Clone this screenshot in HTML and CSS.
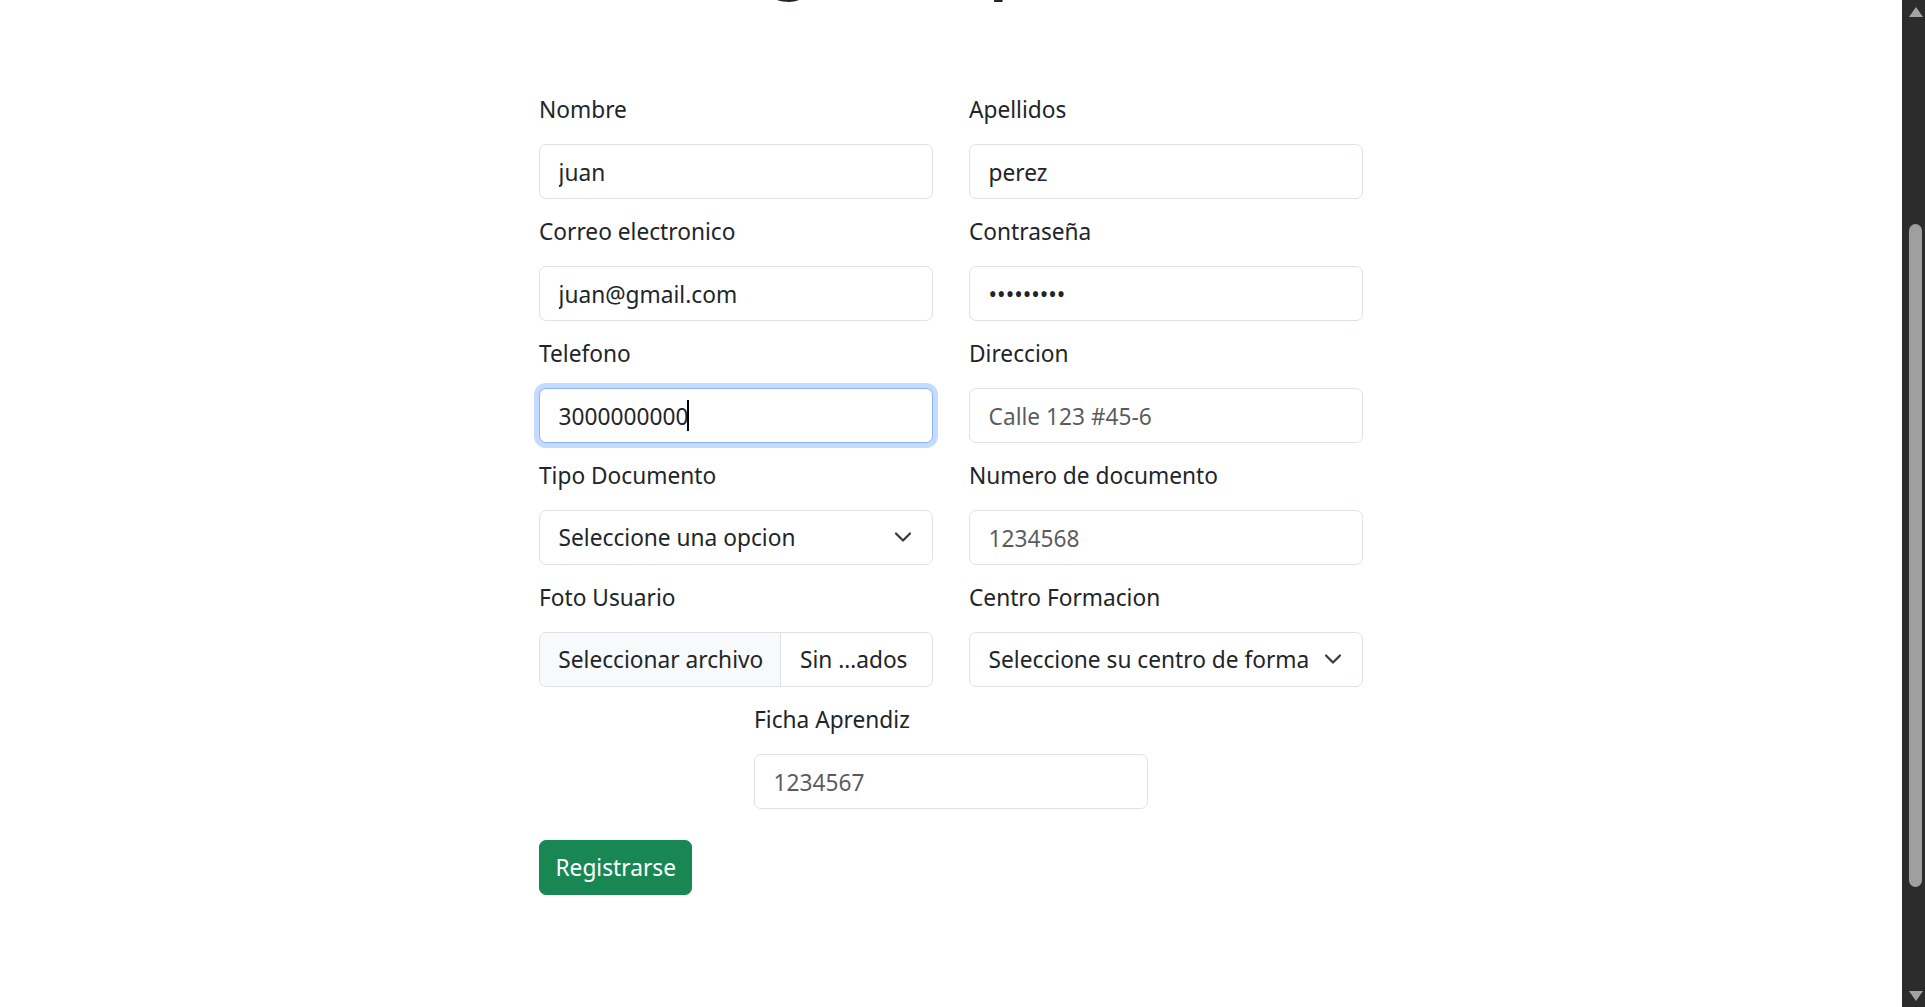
FILE: index.html
```html
<!DOCTYPE html>
<html lang="es">
<head>
<meta charset="utf-8">
<title>Registro Aprendiz</title>
<link rel="stylesheet" href="styles.css">
</head>
<body>
<div class="page">
  <main class="main">
    <h1 class="title">Registro Aprendiz</h1>
    <form class="form">
      <div class="grid">
        <div class="field">
          <label class="label">Nombre</label>
          <input class="control" type="text" value="juan">
        </div>
        <div class="field">
          <label class="label">Apellidos</label>
          <input class="control" type="text" value="perez">
        </div>
        <div class="field">
          <label class="label">Correo electronico</label>
          <input class="control" type="email" value="juan@gmail.com">
        </div>
        <div class="field">
          <label class="label">Contraseña</label>
          <input class="control" type="password" value="123456789">
        </div>
        <div class="field">
          <label class="label">Telefono</label>
          <div class="control-wrap">
            <input class="control control-focus" type="text" value="3000000000">
            <span class="caret"></span>
          </div>
        </div>
        <div class="field">
          <label class="label">Direccion</label>
          <input class="control" type="text" placeholder="Calle 123 #45-6">
        </div>
        <div class="field">
          <label class="label">Tipo Documento</label>
          <div class="control-wrap">
            <select class="control select">
              <option>Seleccione una opcion</option>
            </select>
            <svg class="chevron" width="20" height="12" viewBox="0 0 20 12"><path d="M3 2.5 10 9.5 17 2.5" fill="none" stroke="#343a40" stroke-width="2.2" stroke-linecap="round" stroke-linejoin="round"/></svg>
          </div>
        </div>
        <div class="field">
          <label class="label">Numero de documento</label>
          <input class="control" type="text" placeholder="1234568">
        </div>
        <div class="field">
          <label class="label">Foto Usuario</label>
          <div class="control file">
            <span class="file-btn">Seleccionar archivo</span>
            <span class="file-name">Sin …ados</span>
          </div>
        </div>
        <div class="field">
          <label class="label">Centro Formacion</label>
          <div class="control-wrap">
            <select class="control select">
              <option>Seleccione su centro de formacion</option>
            </select>
            <svg class="chevron" width="20" height="12" viewBox="0 0 20 12"><path d="M3 2.5 10 9.5 17 2.5" fill="none" stroke="#343a40" stroke-width="2.2" stroke-linecap="round" stroke-linejoin="round"/></svg>
          </div>
        </div>
        <div class="field field-center">
          <label class="label">Ficha Aprendiz</label>
          <input class="control" type="text" placeholder="1234567">
        </div>
      </div>
      <button class="btn" type="button">Registrarse</button>
    </form>
  </main>
  <div class="scrollbar">
    <span class="arrow arrow-up"></span>
    <span class="thumb"></span>
    <span class="arrow arrow-down"></span>
  </div>
</div>
</body>
</html>
```

FILE: styles.css
```css
html, body {
  margin: 0;
  padding: 0;
  background: #ffffff;
}

body {
  font-family: "Noto Sans", "Open Sans", sans-serif;
  font-size: 22.7px;
  line-height: 33.6px;
  color: #212529;
}

.page {
  display: flex;
  height: 1007px;
  overflow: hidden;
}

.main {
  flex: 1;
  min-width: 0;
  overflow: hidden;
}

.title {
  margin: -66px 0 0;
  font-size: 56px;
  line-height: 67.2px;
  font-weight: 700;
  text-align: center;
  color: #212529;
}

.form {
  width: 824px;
  margin: 90.8px auto 0;
}

.grid {
  display: grid;
  grid-template-columns: 394px 394px;
  column-gap: 36px;
  row-gap: 15px;
}

.field {
  display: flex;
  flex-direction: column;
}

.field-center {
  grid-column: 1 / -1;
  justify-self: center;
  width: 394px;
}

.label {
  display: block;
  height: 33.6px;
  padding-top: 1px;
  margin-bottom: 17.4px;
}

.control {
  box-sizing: border-box;
  width: 100%;
  height: 55px;
  margin: 0;
  padding: 11px 16.8px 8.4px 18.6px;
  font: inherit;
  font-size: 22.7px;
  line-height: 33.6px;
  color: #212529;
  background: #ffffff;
  border: 1px solid #dee2e6;
  border-radius: 7px;
  outline: none;
}

.control::placeholder {
  color: rgba(33, 37, 41, 0.75);
  opacity: 1;
}

.control-focus {
  border-color: #86b7fe;
  box-shadow: 0 0 0 5px rgba(13, 110, 253, 0.25);
}

.control-wrap {
  position: relative;
}

.caret {
  position: absolute;
  left: 148px;
  top: 12px;
  width: 1.6px;
  height: 31px;
  background: #000000;
}

.select {
  appearance: none;
  -webkit-appearance: none;
  padding-right: 54px;
  padding-top: 1.5px;
  padding-bottom: 0;
  cursor: default;
}

.chevron {
  position: absolute;
  right: 20px;
  top: 21px;
  pointer-events: none;
}

.file {
  display: flex;
  align-items: stretch;
  padding: 1.5px 0 0;
  overflow: hidden;
}

.file-btn {
  display: flex;
  align-items: center;
  padding: 1.5px 17px 0 18.3px;
  margin-top: -1.5px;
  background: #f8f9fa;
  border-right: 1px solid #dee2e6;
  white-space: nowrap;
}

.file-name {
  display: flex;
  align-items: center;
  padding-left: 18.8px;
  white-space: nowrap;
}

.btn {
  display: block;
  box-sizing: border-box;
  height: 55px;
  margin: 31px 0 0;
  padding: 1.5px 15.5px 0;
  font: inherit;
  font-size: 22.7px;
  line-height: 33.6px;
  color: #ffffff;
  background: #198754;
  border: 1px solid #198754;
  border-radius: 7px;
  cursor: pointer;
}

.scrollbar {
  flex: 0 0 23px;
  width: 23px;
  background: #2c2c2c;
  display: flex;
  flex-direction: column;
  align-items: center;
  padding-top: 7px;
  box-sizing: border-box;
}

.arrow {
  width: 0;
  height: 0;
  border-left: 7px solid transparent;
  border-right: 7px solid transparent;
  margin-left: 4px;
}

.arrow-up {
  border-bottom: 10px solid #a3a3a3;
}

.arrow-down {
  border-top: 10px solid #a3a3a3;
  margin-top: 104px;
}

.thumb {
  width: 13px;
  height: 663px;
  margin-top: 207px;
  margin-left: 4px;
  background: #9f9f9f;
  border-radius: 7px;
}
```
